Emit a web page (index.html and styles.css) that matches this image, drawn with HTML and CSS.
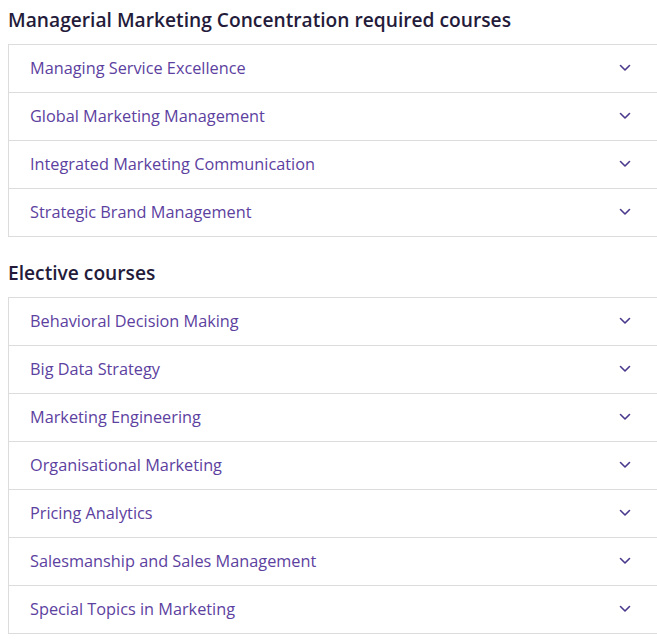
FILE: index.html
```html
<!DOCTYPE html>
<html lang="en">
<head>
<meta charset="utf-8">
<title>Courses</title>
<link rel="stylesheet" href="styles.css">
</head>
<body>
<section class="group">
  <h2 class="heading">Managerial Marketing Concentration required courses</h2>
  <ul class="list">
    <li class="item"><span class="label">Managing Service Excellence</span><svg class="chev" viewBox="0 0 12 8"><path d="M1.5 1.5 6 6 10.5 1.5"/></svg></li>
    <li class="item"><span class="label">Global Marketing Management</span><svg class="chev" viewBox="0 0 12 8"><path d="M1.5 1.5 6 6 10.5 1.5"/></svg></li>
    <li class="item"><span class="label">Integrated Marketing Communication</span><svg class="chev" viewBox="0 0 12 8"><path d="M1.5 1.5 6 6 10.5 1.5"/></svg></li>
    <li class="item"><span class="label">Strategic Brand Management</span><svg class="chev" viewBox="0 0 12 8"><path d="M1.5 1.5 6 6 10.5 1.5"/></svg></li>
  </ul>
</section>
<section class="group second">
  <h2 class="heading">Elective courses</h2>
  <ul class="list">
    <li class="item"><span class="label">Behavioral Decision Making</span><svg class="chev" viewBox="0 0 12 8"><path d="M1.5 1.5 6 6 10.5 1.5"/></svg></li>
    <li class="item"><span class="label">Big Data Strategy</span><svg class="chev" viewBox="0 0 12 8"><path d="M1.5 1.5 6 6 10.5 1.5"/></svg></li>
    <li class="item"><span class="label">Marketing Engineering</span><svg class="chev" viewBox="0 0 12 8"><path d="M1.5 1.5 6 6 10.5 1.5"/></svg></li>
    <li class="item"><span class="label">Organisational Marketing</span><svg class="chev" viewBox="0 0 12 8"><path d="M1.5 1.5 6 6 10.5 1.5"/></svg></li>
    <li class="item"><span class="label">Pricing Analytics</span><svg class="chev" viewBox="0 0 12 8"><path d="M1.5 1.5 6 6 10.5 1.5"/></svg></li>
    <li class="item"><span class="label">Salesmanship and Sales Management</span><svg class="chev" viewBox="0 0 12 8"><path d="M1.5 1.5 6 6 10.5 1.5"/></svg></li>
    <li class="item"><span class="label">Special Topics in Marketing</span><svg class="chev" viewBox="0 0 12 8"><path d="M1.5 1.5 6 6 10.5 1.5"/></svg></li>
  </ul>
</section>
</body>
</html>
```
FILE: styles.css
```css
html, body {
  margin: 0;
  padding: 0;
  background: #ffffff;
  overflow: hidden;
}
body {
  padding: 6px 0 0 8px;
  font-family: "Open Sans", "Noto Sans", sans-serif;
}
.group {
  width: 660px;
}
.second {
  margin-top: 22px;
}
.heading {
  margin: 0 0 10px 0;
  font-size: 19.2px;
  line-height: 28px;
  font-weight: 600;
  color: #241b3b;
}
.list {
  list-style: none;
  margin: 0;
  padding: 0;
  border: 1px solid #dcdcdc;
  border-bottom: none;
}
.item {
  display: flex;
  align-items: center;
  justify-content: space-between;
  box-sizing: border-box;
  height: 48px;
  padding: 0 36px 2px 21px;
  border-bottom: 1px solid #dcdcdc;
}
.label {
  font-size: 16.3px;
  color: #5c41a0;
}
.chev {
  width: 12px;
  height: 8px;
  fill: none;
  stroke: #4b3a8c;
  stroke-width: 1.6;
  stroke-linecap: round;
  stroke-linejoin: round;
}
```
